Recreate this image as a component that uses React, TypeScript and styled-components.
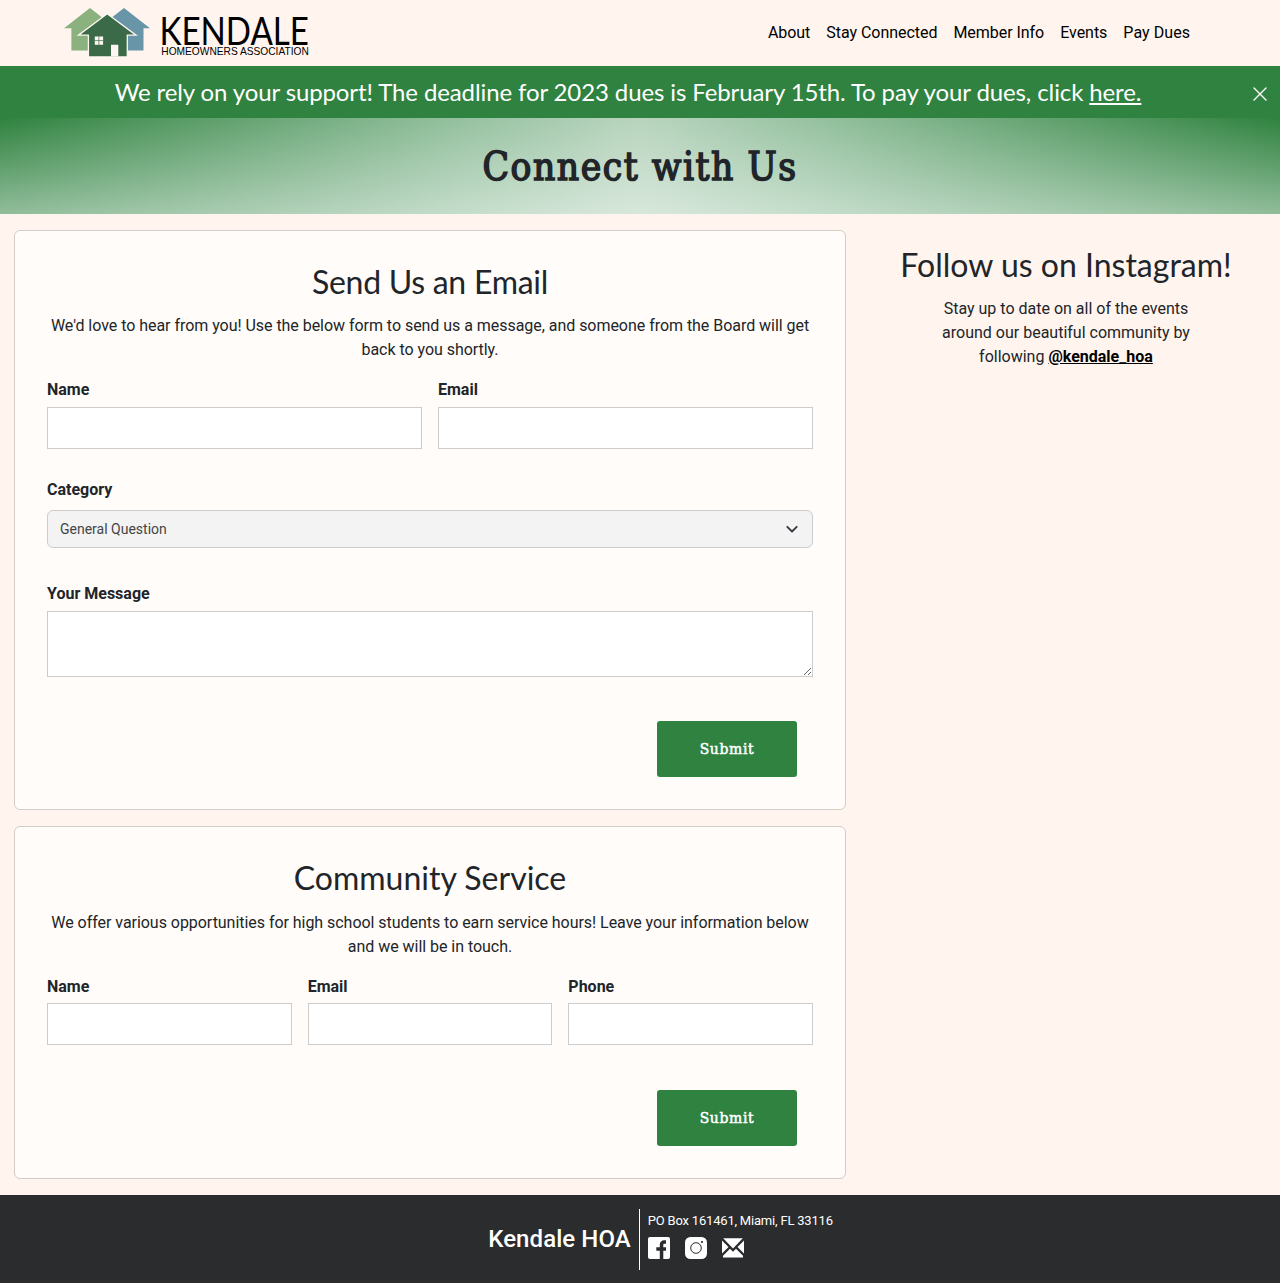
import React from "react";
import styled, { createGlobalStyle } from "styled-components";

const GREEN = "#2f823f";
const SLAB = `"Roboto Slab", "DejaVu Serif Condensed", "DejaVu Serif", serif`;

const GlobalStyle = createGlobalStyle`
  *, *::before, *::after { box-sizing: border-box; }
  body {
    margin: 0;
    background: #fff4ee;
    color: #212529;
    font: 400 16px/24px Roboto, "Liberation Sans", sans-serif;
  }
  h1, h2, p { margin: 0; }
  a { color: inherit; }
`;

const NavBar = styled.header`
  display: flex;
  justify-content: space-between;
  height: 66px;
  padding: 0 82px 0 64px;
`;
const Logo = styled.svg`
  display: block;
  width: 260px;
  height: 66px;
`;
const NavLinks = styled.nav`
  display: flex;
  align-items: flex-start;
  padding-top: 13px;
  letter-spacing: -0.04px;
`;
const NavLink = styled.a`
  padding: 8px;
  color: #000;
  text-decoration: none;

  &:last-child { letter-spacing: 0.06px; }
`;

const Banner = styled.div`
  display: flex;
  align-items: center;
  height: 52px;
  padding: 0 12px 0 0;
  background: ${GREEN};
  color: #fff;
`;
const BannerText = styled.p`
  flex: 1;
  padding-left: 4px;
  text-align: center;
  font: 400 24px/36px Lato, sans-serif;
  letter-spacing: -0.11px;
`;
const CloseButton = styled.button`
  display: flex;
  margin-top: 4px;
  padding: 0;
  border: 0;
  background: none;
  color: #fff;
`;

const Hero = styled.section`
  display: flex;
  align-items: center;
  justify-content: center;
  height: 96px;
  background:
    linear-gradient(to bottom, rgba(250, 252, 252, 0), rgba(250, 252, 252, 0.48)),
    linear-gradient(to right, ${GREEN} 0%, #93c09d 35.5%, #b4d2ba 48%, #b7d4bd 50%, #b4d2ba 52%, #93c09d 64.5%, ${GREEN} 100%);
`;
const HeroTitle = styled.h1`
  padding-top: 2px;
  font: 400 38.5px/48px ${SLAB};
  font-stretch: condensed;
  letter-spacing: 1.55px;
  -webkit-text-stroke: 1.5px currentColor;
`;

const Main = styled.main`
  display: grid;
  grid-template-columns: 832px 1fr;
  column-gap: 16px;
  padding: 16px 10px 16px 14px;
`;
const Cards = styled.div`
  display: flex;
  flex-direction: column;
  gap: 16px;
`;
const Card = styled.form<{ $height: number }>`
  height: ${(p) => p.$height}px;
  padding: 32px;
  border: 1px solid #d2ccc8;
  border-radius: 6px;
  background: #fffcf9;
`;
const Heading = styled.h2<{ $tracking?: number }>`
  text-align: center;
  font: 400 32px/38.4px Lato, sans-serif;
  letter-spacing: ${(p) => p.$tracking ?? 0}px;
`;
const Intro = styled.p<{ $top?: number }>`
  margin: ${(p) => p.$top ?? 13}px 0 16px;
  text-align: center;
  letter-spacing: -0.04px;
`;
const FieldRow = styled.div<{ $columns: number }>`
  display: grid;
  grid-template-columns: repeat(${(p) => p.$columns}, 1fr);
  gap: 16px;
`;
const Field = styled.label<{ $gap?: number; $top?: number }>`
  display: flex;
  flex-direction: column;
  gap: ${(p) => p.$gap ?? 5}px;
  margin-top: ${(p) => p.$top ?? 0}px;
  font-weight: 700;
`;
const Input = styled.input`
  width: 100%;
  height: 42px;
  padding: 8px;
  border: 1px solid #ccc;
  background: #fff;
`;
const SelectBox = styled.button`
  display: flex;
  align-items: center;
  justify-content: space-between;
  height: 38px;
  padding: 0 14px 0 12px;
  border: 1px solid #ccc;
  border-radius: 6px;
  background: #f3f3f3;
  color: #444;
  font: 400 14px/21px Roboto, sans-serif;
`;
const TextArea = styled.textarea`
  display: block;
  width: 100%;
  height: 66px;
  border: 1px solid #ccc;
  background: #fff;
  resize: vertical;
`;
const Actions = styled.div<{ $top?: number }>`
  display: flex;
  justify-content: flex-end;
  margin-top: ${(p) => p.$top ?? 44}px;
  padding-right: 16px;
`;
const Submit = styled.button`
  width: 140px;
  height: 56px;
  padding: 0;
  border: 0;
  border-radius: 3px;
  background: ${GREEN};
  color: #fff;
  font: 400 15.5px/24px ${SLAB};
  font-stretch: condensed;
  letter-spacing: 0.65px;
  -webkit-text-stroke: 0.5px currentColor;
`;

const Aside = styled.aside`
  display: flex;
  flex-direction: column;
  align-items: center;
  padding-top: 16px;
  text-align: center;
`;
const AsideText = styled.p`
  width: 272px;
  margin-top: 13px;
`;
const Handle = styled.a`
  color: #000;
  font-weight: 700;
`;

const Footer = styled.footer`
  display: flex;
  justify-content: center;
  height: 88px;
  padding: 14px 0 13px 41px;
  background: #2b2c2e;
  color: #fff;
`;
const FooterName = styled.div`
  display: flex;
  align-items: center;
  padding: 0 8px 2px 0;
  border-right: 1px solid #fff;
  font-size: 24px;
  font-weight: 500;
  letter-spacing: 0.08px;
`;
const FooterInfo = styled.div`
  padding: 2px 0 0 8px;
  font-size: 13px;
  line-height: 20px;
  letter-spacing: -0.2px;
`;
const SocialLinks = styled.div`
  display: flex;
  gap: 15px;
  margin-top: 6px;
`;
const SocialIcon = styled.svg`
  display: block;
  width: 22px;
  height: 22px;
`;

function KendaleLogo() {
  return (
    <Logo viewBox="64 0 260 66" aria-label="Kendale Homeowners Association">
      <path fill="#8ab17e" d="M64 28.2 90 8 116 28.2H109V50.5H71.4V28.2Z" />
      <path fill="#6896a8" d="M98 28.2 124 8 150 28.2H143.5V50.5H104V28.2Z" />
      <path fill="#3b6a49" stroke="#fff8f2" strokeWidth="1.3" d="M107.2 13.7 136 35.2H127.3V57H88.4V35.2H78.5Z" />
      <path fill="#fff8f2" d="M94.8 36.5h8.3v8.3h-8.3ZM111 44.7h7.3v11.8H111Z" />
      <path stroke="#3b6a49" strokeWidth=".7" d="M98.9 36.5v8.3M94.8 40.6h8.3" />
      <text x="159.5" y="44.8" fontFamily="Lato" fontSize="38.5" textLength="149.5" lengthAdjust="spacingAndGlyphs">KENDALE</text>
      <text x="161.3" y="55.2" fontFamily="Liberation Sans" fontSize="11" textLength="147.5" lengthAdjust="spacingAndGlyphs">HOMEOWNERS ASSOCIATION</text>
    </Logo>
  );
}

const navItems = ["About", "Stay Connected", "Member Info", "Events", "Pay Dues"];

export default function App() {
  return (
    <>
      <GlobalStyle />
      <NavBar>
        <KendaleLogo />
        <NavLinks>
          {navItems.map((item) => <NavLink key={item} href="#">{item}</NavLink>)}
        </NavLinks>
      </NavBar>
      <Banner>
        <BannerText>
          We rely on your support! The deadline for 2023 dues is February 15th. To pay your dues, click <a href="#">here.</a>
        </BannerText>
        <CloseButton aria-label="Close">
          <svg width="16" height="16" viewBox="0 0 16 16" stroke="currentColor" strokeWidth="1.4" strokeLinecap="round"><path d="m2 2 12 12M14 2 2 14" /></svg>
        </CloseButton>
      </Banner>
      <Hero><HeroTitle>Connect with Us</HeroTitle></Hero>
      <Main>
        <Cards>
          <Card $height={580}>
            <Heading $tracking={-0.27}>Send Us an Email</Heading>
            <Intro>We'd love to hear from you! Use the below form to send us a message, and someone from the Board will get back to you shortly.</Intro>
            <FieldRow $columns={2}>
              <Field>Name<Input /></Field>
              <Field>Email<Input /></Field>
            </FieldRow>
            <Field as="div" $gap={8} $top={29}>
              Category
              <SelectBox type="button">
                General Question
                <svg width="12" height="12" viewBox="0 0 12 12" fill="none" stroke="#343a40" strokeWidth="1.8" strokeLinecap="round" strokeLinejoin="round"><path d="m1.3 3.8 4.7 4.7 4.7-4.7" /></svg>
              </SelectBox>
            </Field>
            <Field $top={34}>Your Message<TextArea /></Field>
            <Actions><Submit type="button">Submit</Submit></Actions>
          </Card>
          <Card $height={353}>
            <Heading>Community Service</Heading>
            <Intro $top={14}>We offer various opportunities for high school students to earn service hours! Leave your information below and we will be in touch.</Intro>
            <FieldRow $columns={3}>
              <Field $gap={4}>Name<Input /></Field>
              <Field $gap={4}>Email<Input /></Field>
              <Field $gap={4}>Phone<Input /></Field>
            </FieldRow>
            <Actions $top={45}><Submit type="button">Submit</Submit></Actions>
          </Card>
        </Cards>
        <Aside>
          <Heading>Follow us on Instagram!</Heading>
          <AsideText>Stay up to date on all of the events around our beautiful community by following <Handle href="#">@kendale_hoa</Handle></AsideText>
        </Aside>
      </Main>
      <Footer>
        <FooterName>Kendale HOA</FooterName>
        <FooterInfo>
          PO Box 161461, Miami, FL 33116
          <SocialLinks>
            <SocialIcon viewBox="0 0 22 22">
              <rect width="22" height="22" rx="2" fill="#fff" />
              <path fill="#2b2c2e" d="M11.8 22v-8.2H8.3v-3.5h3.5V7.8c0-3 1.8-4.6 4.5-4.6H18v3.5h-1.4c-1 0-1.3.5-1.3 1.4v2.2H18v3.5h-2.7V22Z" />
            </SocialIcon>
            <SocialIcon viewBox="0 0 22 22">
              <rect width="22" height="22" rx="5.5" fill="#fff" />
              <circle cx="11" cy="11" r="5.3" fill="none" stroke="#2b2c2e" strokeWidth="1" />
              <circle cx="17" cy="5" r="1.1" fill="#2b2c2e" />
            </SocialIcon>
            <SocialIcon viewBox="0 0 22 22">
              <path fill="#fff" d="M1.2 1.2h19.6L11 11.4ZM0 3.5 6.5 10 0 16.5ZM22 3.5 15.5 10l6.5 6.5ZM1 20.5v-1.8l7-7 3 3 3-3 7 7v1.8Z" />
            </SocialIcon>
          </SocialLinks>
        </FooterInfo>
      </Footer>
    </>
  );
}
